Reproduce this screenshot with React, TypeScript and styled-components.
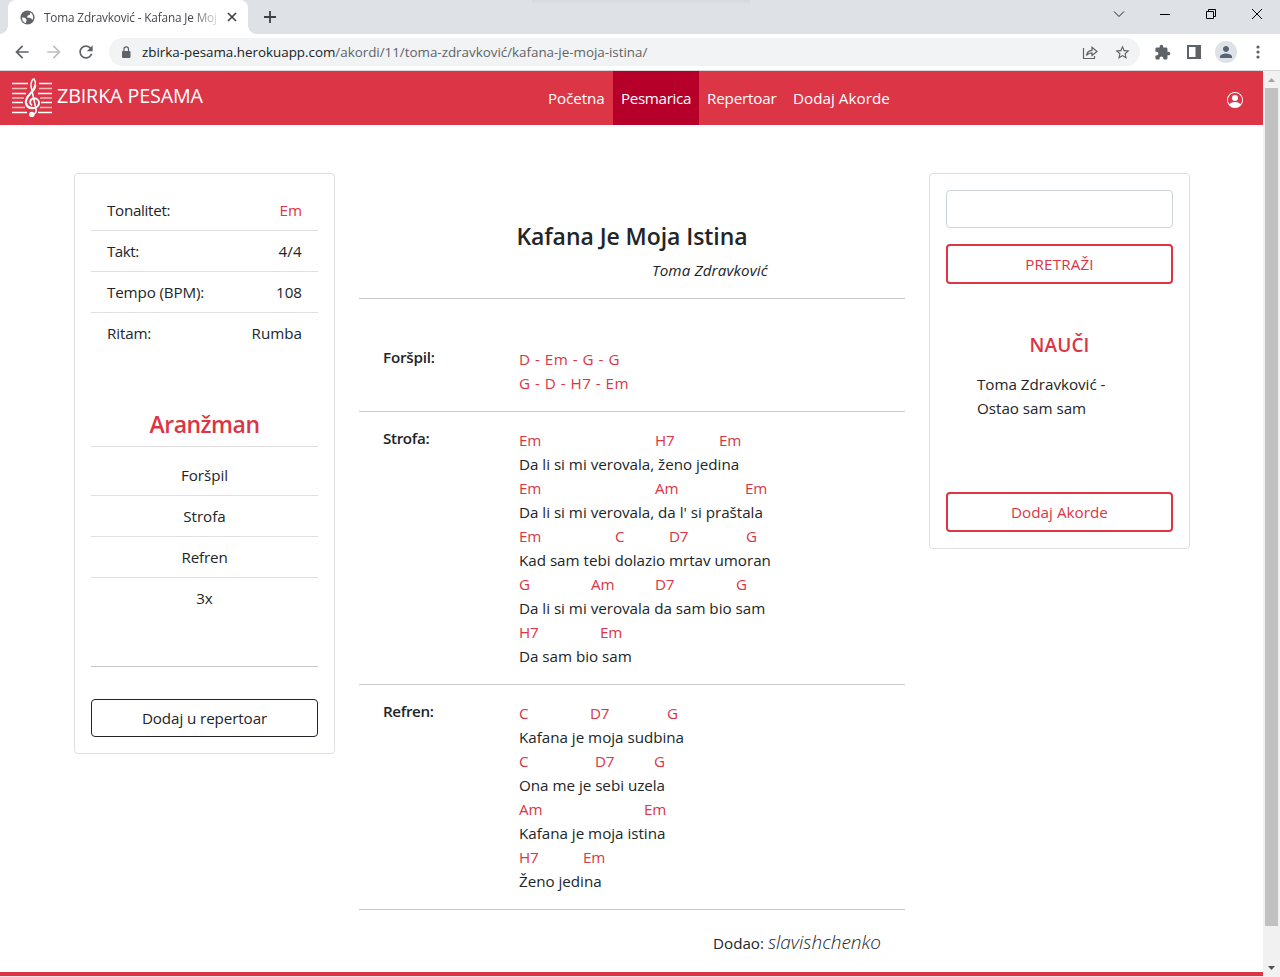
import React from "react";
import styled, { createGlobalStyle } from "styled-components";

const RED = "#dc3545";
const INK = "#212529";

const GlobalStyle = createGlobalStyle`
  *, *::before, *::after { box-sizing: border-box; }
  body {
    margin: 0;
    background: #fff;
    color: ${INK};
    font-family: "Open Sans", "Noto Sans", sans-serif;
    font-size: 15.2px;
    line-height: 24px;
    overflow: hidden;
  }
  ul, h1, h2, h3, p { margin: 0; padding: 0; font-size: inherit; font-weight: inherit; }
  ul { list-style: none; }
`;

const T = styled.span<{ $ls?: number; $size?: number; $weight?: number; $color?: string; $italic?: boolean }>`
  display: inline-block;
  white-space: pre;
  letter-spacing: ${(p) => p.$ls ?? -0.02}px;
  ${(p) => p.$size && `font-size: ${p.$size}px;`}
  ${(p) => p.$weight && `font-weight: ${p.$weight};`}
  ${(p) => p.$color && `color: ${p.$color};`}
  ${(p) => p.$italic && `font-style: italic;`}
`;

/* ---------- browser frame ---------- */

const Window = styled.div`
  width: 1280px;
  height: 977px;
  display: flex;
  flex-direction: column;
`;

const TabStrip = styled.div`
  height: 34px;
  flex: none;
  display: flex;
  background: linear-gradient(#d6d9de, #dee1e6) 532px 0 / 218px 5px no-repeat #dee1e6;
  padding-left: 8px;
`;

const Tab = styled.div`
  position: relative;
  width: 240px;
  height: 34px;
  background: #fff;
  border-radius: 8px 8px 0 0;
  display: flex;
  align-items: center;
  padding: 0 11px 0 12px;
  font-size: 11.8px;
  svg { flex: none; }
  &::before, &::after {
    content: "";
    position: absolute;
    bottom: 0;
    width: 8px;
    height: 8px;
  }
  &::before { left: -8px; background: radial-gradient(circle at 0 0, transparent 7.5px, #fff 8px); }
  &::after { right: -8px; background: radial-gradient(circle at 100% 0, transparent 7.5px, #fff 8px); }
`;

const TabTitle = styled.div`
  flex: 1;
  margin-left: 9px;
  white-space: nowrap;
  color: #45484d;
  mask-image: linear-gradient(90deg, #000 148px, transparent 178px);
`;

const NewTab = styled.div`
  flex: 1;
  padding: 10px 0 0 15px;
  svg { display: block; }
`;

const WindowButtons = styled.div`
  display: flex;
  gap: 30px;
  padding: 6px 15px 0 0;
  svg { display: block; }
`;

const Toolbar = styled.div`
  height: 37px;
  flex: none;
  display: flex;
  align-items: center;
  border-bottom: 1px solid #d5d8db;
  background: #fff;
  padding-left: 12px;
  color: #5f6368;
  svg { display: block; flex: none; }
`;

const NavButtons = styled.div`
  display: flex;
  gap: 12px;
  width: 97px;
`;

const Omnibox = styled.div`
  width: 1031px;
  height: 28px;
  border-radius: 14px;
  background: #f1f3f4;
  display: flex;
  align-items: center;
  padding: 0 9px 0 12px;
  font-size: 13.4px;
`;

const Address = styled.div`
  flex: 1;
  margin-left: 11px;
  color: #5f6368;
  b { color: #202124; font-weight: 400; }
`;

const OmniIcons = styled.div`
  display: flex;
  gap: 16px;
`;

const ToolIcons = styled.div`
  display: flex;
  align-items: center;
  margin-left: 14px;
`;

const PanelIcon = styled.svg`
  margin-left: 16px;
`;

const Avatar = styled.div`
  width: 22px;
  height: 22px;
  margin: 0 19px 0 14px;
  border-radius: 50%;
  background: #dee1e6;
  display: grid;
  place-items: center;
`;

const Viewport = styled.div`
  flex: 1;
  min-height: 0;
  display: flex;
`;

const Scrollbar = styled.div`
  width: 17px;
  background: #f1f1f1;
  display: flex;
  flex-direction: column;
  align-items: center;
  svg { display: block; }
`;

const Thumb = styled.div`
  width: 13px;
  height: 838px;
  margin-bottom: 34px;
  background: #c1c1c1;
`;

/* ---------- page ---------- */

const Page = styled.div`
  width: 1263px;
  display: flex;
  flex-direction: column;
`;

const Navbar = styled.header`
  height: 54px;
  flex: none;
  background: ${RED};
  color: #fff;
  display: flex;
  align-items: center;
`;

const Brand = styled.div`
  width: 540px;
  display: flex;
  align-items: center;
  padding-left: 11px;
  gap: 4px;
`;

const BrandName = styled.div`
  padding-bottom: 4px;
`;

const NavLinks = styled.nav`
  flex: 1;
  display: flex;
  height: 54px;
`;

const NavLink = styled.div<{ $w: number; $active?: boolean }>`
  width: ${(p) => p.$w}px;
  padding-left: 8px;
  line-height: 54px;
  background: ${(p) => (p.$active ? "#b60029" : "transparent")};
`;

const Account = styled.div`
  padding: 4px 20px 0 0;
  svg { display: block; }
`;

const Content = styled.main`
  flex: 1;
  min-height: 0;
  display: grid;
  grid-template-columns: 261px 546px 261px;
  column-gap: 24px;
  padding: 48px 0 0 74px;
  align-items: start;
`;

const FooterBar = styled.footer`
  height: 5px;
  flex: none;
  background: ${RED};
  border-bottom: 1px solid #dfe5ee;
`;

const Card = styled.section`
  border: 1px solid #dfdfdf;
  border-radius: 4px;
  padding: 16px;
`;

const InfoRow = styled.li`
  height: 41px;
  padding: 8px 16px;
  display: flex;
  justify-content: space-between;
  border-bottom: 1px solid #dfdfdf;
  &:last-child { border-bottom-color: transparent; }
`;

const ArrangementTitle = styled.h2`
  height: 48px;
  margin: 45px 0 8px;
  padding-top: 9px;
  line-height: 32px;
  text-align: center;
  border-bottom: 1px solid #dfdfdf;
`;

const ArrangementRow = styled(InfoRow)`
  justify-content: center;
`;

const Rule = styled.div`
  height: 1px;
  margin: 47px 0 32px;
  background: #c8c8c9;
`;

const Button = styled.div<{ $tone: string; $border: number }>`
  height: ${(p) => 36 + 2 * p.$border}px;
  border: ${(p) => p.$border}px solid ${(p) => p.$tone};
  border-radius: 4px;
  color: ${(p) => p.$tone};
  text-align: center;
  line-height: 36px;
`;

const SearchField = styled.div`
  height: 38px;
  border: 1px solid #ced4da;
  border-radius: 4px;
  margin-bottom: 16px;
`;

const LearnTitle = styled.h3`
  margin: 49px 0 15px;
  height: 24px;
  text-align: center;
`;

const LearnList = styled.p`
  height: 120px;
  padding-left: 31px;
`;

const SongHead = styled.div`
  height: 126px;
  padding-top: 47px;
  border-bottom: 1px solid #c8c8c9;
  display: flex;
  flex-direction: column;
`;

const SongTitle = styled.h1`
  height: 32px;
  text-align: center;
  line-height: 32px;
`;

const Artist = styled.p`
  padding: 6px 0 0 293px;
`;

const Verse = styled.div<{ $top: number }>`
  padding: ${(p) => p.$top}px 0 16px 24px;
  border-bottom: 1px solid #c8c8c9;
  display: grid;
  grid-template-columns: 136px 1fr;
`;

const VerseName = styled.div`
  height: 24px;
  margin-top: -2px;
`;

const ChordLine = styled.div`
  display: flex;
  height: 24px;
  color: ${RED};
`;

const Chord = styled.span<{ $w?: number }>`
  white-space: pre;
  letter-spacing: -0.2px;
  width: ${(p) => (p.$w ? p.$w + "px" : "auto")};
`;

const Lyric = styled.div`
  height: 24px;
  white-space: pre;
`;

const Credit = styled.div`
  padding: 20px 24px 0 0;
  display: flex;
  justify-content: flex-end;
  align-items: baseline;
  gap: 4px;
`;

type ChordCell = [string, number?];
type Line = { chords: ChordCell[]; text: string };

const strofa: Line[] = [
  { chords: [["Em", 136], ["H7", 64], ["Em"]], text: "Da li si mi verovala, ženo jedina" },
  { chords: [["Em", 136], ["Am", 90], ["Em"]], text: "Da li si mi verovala, da l' si praštala" },
  { chords: [["Em", 96], ["C", 54], ["D7", 77], ["G"]], text: "Kad sam tebi dolazio mrtav umoran" },
  { chords: [["G", 72], ["Am", 64], ["D7", 81], ["G"]], text: "Da li si mi verovala da sam bio sam" },
  { chords: [["H7", 81], ["Em"]], text: "Da sam bio sam" },
];

const refren: Line[] = [
  { chords: [["C", 71], ["D7", 77], ["G"]], text: "Kafana je moja sudbina" },
  { chords: [["C", 76], ["D7", 59], ["G"]], text: "Ona me je sebi uzela" },
  { chords: [["Am", 125], ["Em"]], text: "Kafana je moja istina" },
  { chords: [["H7", 64], ["Em"]], text: "Ženo jedina" },
];

const Lines = ({ lines }: { lines: Line[] }) => (
  <div>
    {lines.map((l, i) => (
      <React.Fragment key={i}>
        <ChordLine>
          {l.chords.map(([c, w], j) => (
            <Chord key={j} $w={w}>{c}</Chord>
          ))}
        </ChordLine>
        <Lyric><T>{l.text}</T></Lyric>
      </React.Fragment>
    ))}
  </div>
);

const Mi = ({ d, size = 20, color = "#5f6368" }: { d: string; size?: number; color?: string }) => (
  <svg width={size} height={size} viewBox="0 0 24 24" fill={color}><path d={d} /></svg>
);

const Logo = () => (
  <svg width="42" height="42" viewBox="0 0 42 42" fill="none" stroke="#fff">
    <path d="M1 6.500H17M28 6.500H41M1 16.500H15M27 16.500H41M1 25.500H12M30 25.500H41M1 35.500H16M27 35.500H41" strokeWidth="1.300" />
    <path d="M1 11.500H16M28 11.500H41M1 21H13M29 21H41M1 30.500H14M29 30.500H41" strokeWidth="1.500" opacity=".65" />
    <path d="M22.500 37C25 36.500 25.500 34.500 25 32L20 9.500C19.500 5 21.500 2 23.200 2C25.500 6 24.500 10.500 20.500 15" strokeWidth="1.500" />
    <path d="M24.300 8C23.800 12 21.500 14.500 19 17C16 20 14.600 22.500 15 26C15.500 29.500 18.500 31.300 22 31" strokeWidth="2.300" />
    <path d="M22 31.200C26 31 28.400 28.500 28 25.200C27.500 22 24 20.500 21.500 21.700C18.500 23 18.300 26.500 21 28.300" strokeWidth="1.900" />
    <circle cx="20.800" cy="37.400" r="2.700" fill="#fff" stroke="none" />
  </svg>
);

export default function App() {
  return (
    <>
      <GlobalStyle />
      <Window>
        <TabStrip>
          <Tab>
            <svg width="15" height="15" viewBox="0 0 16 16">
              <circle cx="8" cy="8" r="7.500" fill="#5f6368" />
              <path d="M2 8C4 8 5 8 6.500 9.500C8 11 6 11.500 6.500 14C4 13.500 2 11 2 8ZM7 2L11 2.500L10.500 5L8 6L7.500 8L11 8.500L13.500 10.500C14.500 8 14 5 12 3.300C11 2.500 9 2 7 2Z" fill="#fff" />
            </svg>
            <TabTitle><T $ls={-0.16}>Toma Zdravković - Kafana Je Moj</T></TabTitle>
            <svg width="10" height="10" viewBox="0 0 10 10" stroke="#3c4043" strokeWidth="1.600"><path d="M1 1L9 9M9 1L1 9" /></svg>
          </Tab>
          <NewTab>
            <svg width="14" height="14" viewBox="0 0 14 14" stroke="#3c4043" strokeWidth="1.800"><path d="M7 1V13M1 7H13" /></svg>
          </NewTab>
          <WindowButtons>
            <svg width="16" height="16" viewBox="0 0 16 16" fill="none" stroke="#222"><path d="M3 5.500L8 10.500L13 5.500" /></svg>
            <svg width="16" height="16" viewBox="0 0 16 16" fill="none" stroke="#000"><path d="M3 8.500H13" /></svg>
            <svg width="16" height="16" viewBox="0 0 16 16" fill="none" stroke="#000"><path d="M3.500 5.500H10.500V12.500H3.500ZM5.500 5.500V3.500H12.500V10.500H10.500" /></svg>
            <svg width="16" height="16" viewBox="0 0 16 16" fill="none" stroke="#000"><path d="M3 3L13 13M13 3L3 13" /></svg>
          </WindowButtons>
        </TabStrip>
        <Toolbar>
          <NavButtons>
            <Mi d="M20 11H7.830l5.590-5.590L12 4l-8 8 8 8 1.410-1.410L7.830 13H20v-2z" />
            <Mi color="#bdbfc1" d="M12 4l-1.410 1.410L16.170 11H4v2h12.170l-5.580 5.590L12 20l8-8z" />
            <Mi d="M17.650 6.350C16.200 4.900 14.210 4 12 4c-4.420 0-7.990 3.580-7.990 8s3.570 8 7.990 8c3.730 0 6.840-2.550 7.730-6h-2.080c-.82 2.330-3.040 4-5.650 4-3.310 0-6-2.690-6-6s2.690-6 6-6c1.660 0 3.140.69 4.220 1.780L13 11h7V4l-2.350 2.350z" />
          </NavButtons>
          <Omnibox>
            <svg width="10" height="13" viewBox="0 0 10 13"><rect x="1" y="5" width="8.500" height="7" rx="1" fill="#5f6368" /><path d="M3 5.500V3.200A2.200 2.200 0 0 1 7.500 3.200V5.500" fill="none" stroke="#5f6368" strokeWidth="1.200" /></svg>
            <Address><T $ls={-0.015}><b>zbirka-pesama.herokuapp.com</b>/akordi/11/toma-zdravković/kafana-je-moja-istina/</T></Address>
            <OmniIcons>
              <svg width="16" height="16" viewBox="0 0 16 16" fill="none" stroke="#5f6368" strokeWidth="1.200"><path d="M1.500 4V14.500H12.500V12M4.500 11.500C5 8 7 6.500 10 6.300V3.200L15 7.500L10 11.500V8.800C7.500 8.800 6 9.500 4.500 11.500Z" /></svg>
              <Mi size={17} d="M22 9.240l-7.190-.62L12 2 9.190 8.630 2 9.240l5.460 4.730L5.820 21 12 17.270 18.180 21l-1.630-7.030L22 9.240zM12 15.400l-3.760 2.270 1-4.280-3.320-2.880 4.380-.38L12 6.100l1.710 4.040 4.380.38-3.320 2.880 1 4.280L12 15.400z" />
            </OmniIcons>
          </Omnibox>
          <ToolIcons>
            <Mi size={17} d="M20.500 11H19V7c0-1.100-.9-2-2-2h-4V3.500C13 2.120 11.880 1 10.500 1S8 2.120 8 3.500V5H4c-1.100 0-1.990.9-1.990 2v3.800H3.500c1.490 0 2.700 1.210 2.700 2.700s-1.210 2.700-2.700 2.700H2V20c0 1.100.9 2 2 2h3.800v-1.500c0-1.490 1.210-2.700 2.700-2.700 1.490 0 2.700 1.210 2.700 2.700V22H17c1.100 0 2-.9 2-2v-4h1.500c1.380 0 2.500-1.120 2.500-2.500S21.880 11 20.500 11z" />
            <PanelIcon width="14" height="14" viewBox="0 0 14 14"><path d="M0 0H14V14H0ZM2 2V12H8.500V2Z" fill="#5f6368" fillRule="evenodd" /></PanelIcon>
            <Avatar><Mi size={18} color="#56627a" d="M12 12c2.210 0 4-1.790 4-4s-1.790-4-4-4-4 1.790-4 4 1.790 4 4 4zm0 2c-2.670 0-8 1.340-8 4v2h16v-2c0-2.660-5.330-4-8-4z" /></Avatar>
            <svg width="4" height="14" viewBox="0 0 4 14" fill="#5f6368"><circle cx="2" cy="2" r="1.600" /><circle cx="2" cy="7" r="1.600" /><circle cx="2" cy="12" r="1.600" /></svg>
          </ToolIcons>
        </Toolbar>
        <Viewport>
          <Page>
            <Navbar>
              <Brand><Logo /><BrandName><T $size={19.7} $ls={-0.12}>ZBIRKA PESAMA</T></BrandName></Brand>
              <NavLinks>
                <NavLink $w={73}><T $ls={-0.1}>Početna</T></NavLink>
                <NavLink $w={86} $active><T $ls={-0.35}>Pesmarica</T></NavLink>
                <NavLink $w={86}><T $ls={-0.18}>Repertoar</T></NavLink>
                <NavLink $w={114}><T $ls={0.03}>Dodaj Akorde</T></NavLink>
              </NavLinks>
              <Account>
                <svg width="16" height="16" viewBox="0 0 16 16" fill="#fff"><path d="M11 6a3 3 0 1 1-6 0 3 3 0 0 1 6 0z" /><path fillRule="evenodd" d="M0 8a8 8 0 1 1 16 0A8 8 0 0 1 0 8zm8-7a7 7 0 0 0-5.468 11.370C3.242 11.226 4.805 10 8 10s4.757 1.225 5.468 2.370A7 7 0 0 0 8 1z" /></svg>
              </Account>
            </Navbar>
            <Content>
              <Card>
                <ul>
                  <InfoRow><T $ls={-0.3}>Tonalitet:</T><T $color={RED}>Em</T></InfoRow>
                  <InfoRow><T $ls={-0.5}>Takt:</T><T $ls={0.2}>4/4</T></InfoRow>
                  <InfoRow><T $ls={-0.15}>Tempo (BPM):</T><T>108</T></InfoRow>
                  <InfoRow><T $ls={-0.15}>Ritam:</T><T>Rumba</T></InfoRow>
                </ul>
                <ArrangementTitle><T $size={23} $weight={600} $color={RED} $ls={-0.5}>Aranžman</T></ArrangementTitle>
                <ul>
                  <ArrangementRow><T>Foršpil</T></ArrangementRow>
                  <ArrangementRow><T>Strofa</T></ArrangementRow>
                  <ArrangementRow><T $ls={-0.15}>Refren</T></ArrangementRow>
                  <ArrangementRow><T>3x</T></ArrangementRow>
                </ul>
                <Rule />
                <Button $tone={INK} $border={1}><T $ls={-0.1}>Dodaj u repertoar</T></Button>
              </Card>
              <article>
                <SongHead>
                  <SongTitle><T $size={23} $weight={600} $ls={-0.06}>Kafana Je Moja Istina</T></SongTitle>
                  <Artist><T $italic $ls={0.12}>Toma Zdravković</T></Artist>
                </SongHead>
                <Verse $top={48}>
                  <VerseName><T $weight={600} $ls={-0.2}>Foršpil:</T></VerseName>
                  <div>
                    <ChordLine><T $ls={0.5}>D - Em - G - G</T></ChordLine>
                    <ChordLine><T $ls={0.48}>G - D - H7 - Em</T></ChordLine>
                  </div>
                </Verse>
                <Verse $top={16}>
                  <VerseName><T $weight={600} $ls={-0.35}>Strofa:</T></VerseName>
                  <Lines lines={strofa} />
                </Verse>
                <Verse $top={16}>
                  <VerseName><T $weight={600} $ls={-0.35}>Refren:</T></VerseName>
                  <Lines lines={refren} />
                </Verse>
                <Credit><T>Dodao:</T><T $size={19} $weight={300} $italic $ls={0}>slavishchenko</T></Credit>
              </article>
              <Card>
                <SearchField />
                <Button $tone={RED} $border={2}><T $ls={0.15}>PRETRAŽI</T></Button>
                <LearnTitle><T $size={19} $weight={600} $color={RED} $ls={0.1}>NAUČI</T></LearnTitle>
                <LearnList><T>Toma Zdravković -</T><br /><T>Ostao sam sam</T></LearnList>
                <Button $tone={RED} $border={2}><T $ls={0.04}>Dodaj Akorde</T></Button>
              </Card>
            </Content>
            <FooterBar />
          </Page>
          <Scrollbar>
            <svg width="17" height="17" viewBox="0 0 17 17"><path d="M5 11L8.500 7L12 11Z" fill="#a3a3a3" /></svg>
            <Thumb />
            <svg width="17" height="17" viewBox="0 0 17 17"><path d="M5 6L8.500 10L12 6Z" fill="#505050" /></svg>
          </Scrollbar>
        </Viewport>
      </Window>
    </>
  );
}
